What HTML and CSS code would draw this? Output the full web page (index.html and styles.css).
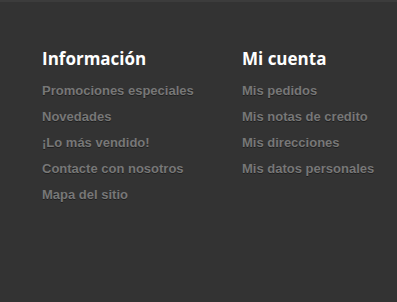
FILE: index.html
```html
<!DOCTYPE html>
<html lang="es">

<head>
    <meta charset="UTF-8">
    <meta name="viewport" content="width=device-width, initial-scale=1.0">
    <title>Footer</title>
    <link rel="stylesheet" href="styles.css">
</head>

<body>
    <footer class="footer">
        <div class="footer-block">
            <h4>Información</h4>
            <ul>
                <li><a href="#">Promociones especiales</a></li>
                <li><a href="#">Novedades</a></li>
                <li><a href="#">¡Lo más vendido!</a></li>
                <li><a href="#">Contacte con nosotros</a></li>
                <li><a href="#">Mapa del sitio</a></li>
            </ul>
        </div>
        <div class="footer-block">
            <h4>Mi cuenta</h4>
            <ul>
                <li><a href="#">Mis pedidos</a></li>
                <li><a href="#">Mis notas de credito</a></li>
                <li><a href="#">Mis direcciones</a></li>
                <li><a href="#">Mis datos personales</a></li>
            </ul>
        </div>
    </footer>
</body>

</html>
```

FILE: styles.css
```css
html,
body {
    margin: 0;
    height: 100%;
    background: #333333;
}

.footer {
    display: grid;
    grid-template-columns: 200px 1fr;
    min-height: 100%;
    box-sizing: border-box;
    border-top: 2px solid #3c3c3c;
    padding: 45px 0 0 42px;
    align-content: start;
}

.footer-block h4 {
    margin: 0 0 7px;
    font-family: "Open Sans", sans-serif;
    font-weight: 700;
    font-size: 17px;
    line-height: 24px;
    color: #ffffff;
}

.footer-block ul {
    list-style: none;
    margin: 0;
    padding: 0;
}

.footer-block li {
    font-family: "Liberation Sans", Arial, sans-serif;
    font-size: 13px;
    line-height: 26px;
    white-space: nowrap;
}

.footer-block a {
    font-weight: 700;
    color: #777777;
    text-decoration: none;
    text-shadow: 0 1px 0 #1f1f1f;
}
```
